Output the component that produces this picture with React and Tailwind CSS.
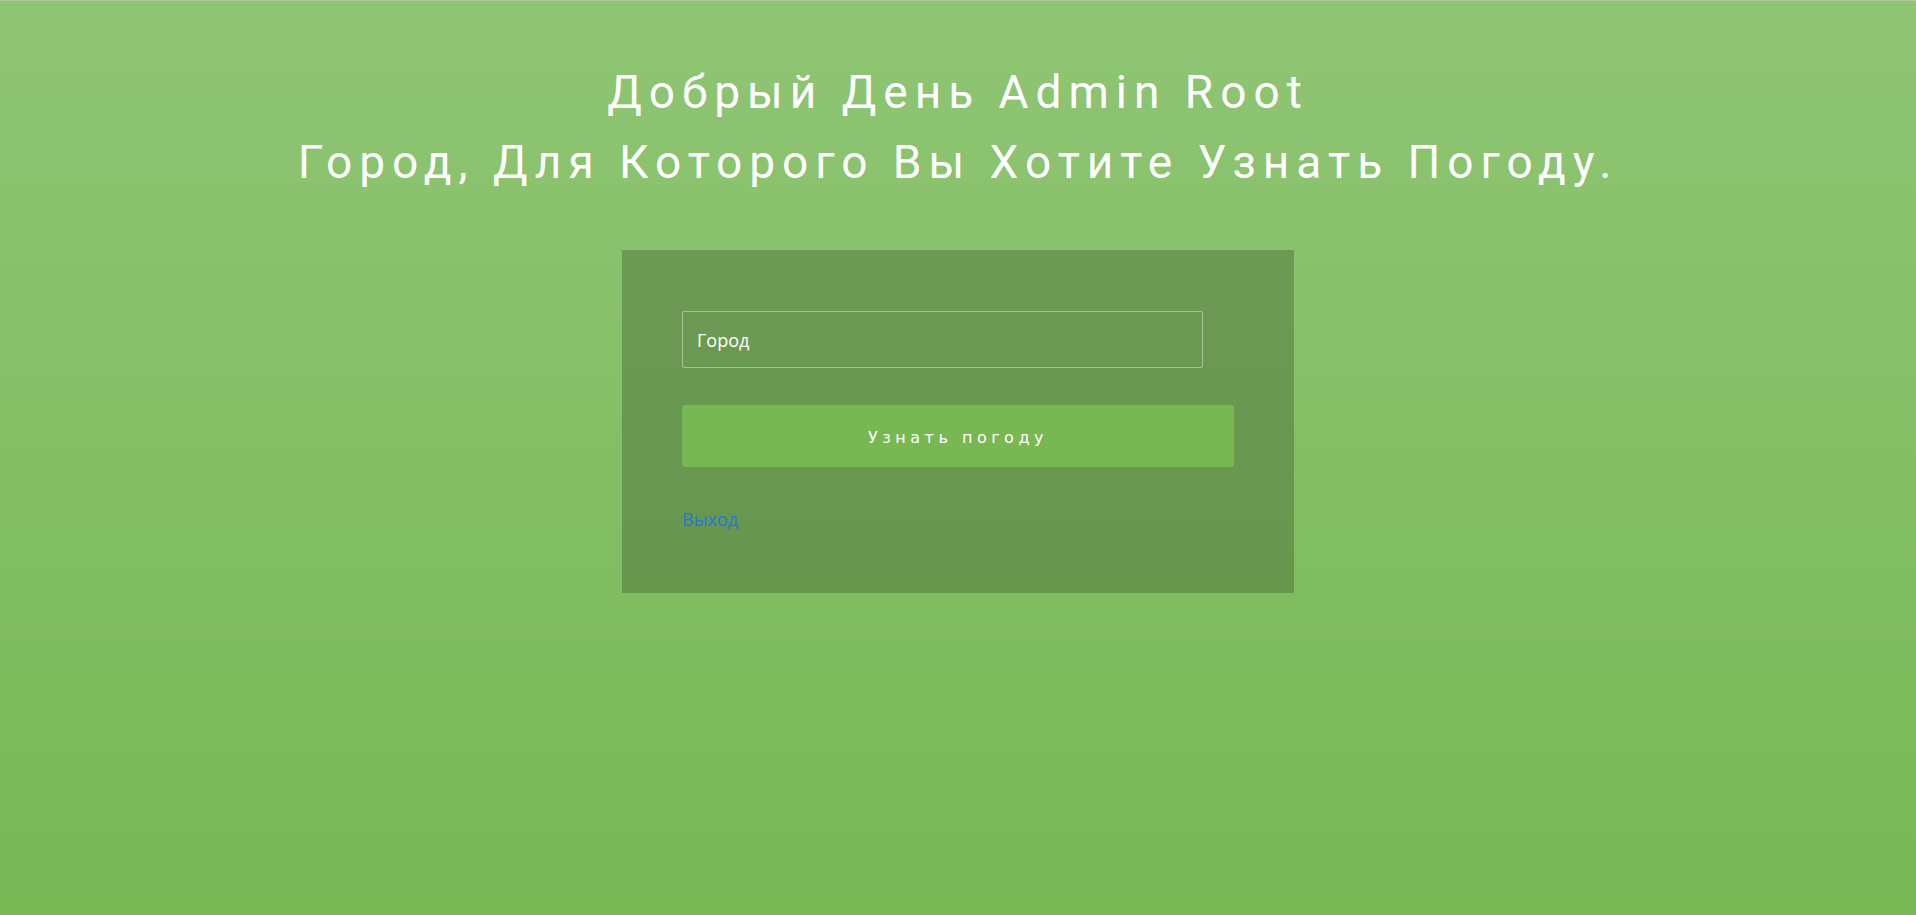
import { useState } from 'react';

const WeatherLogin = () => {
  const [city, setCity] = useState("");

  return (
    <div className="min-h-screen bg-gradient-to-b from-[#8fc574] to-[#78b855] font-['Roboto',sans-serif]">
      <div className="h-px bg-[#aec9a2]" />

      <div className="pt-[56px] text-center text-white text-[46px] leading-[70px] tracking-[7px] font-normal">
        <h1>Добрый День Admin Root</h1>
        <h2>Город, Для Которого Вы Хотите Узнать Погоду.</h2>
      </div>

      <div className="flex justify-center mt-[53px]">
        <form
          onSubmit={e => e.preventDefault()}
          className="w-[672px] bg-black/20 pt-[61px] px-[60px] pb-[60px]"
        >
          <input
            value={city}
            onChange={e => setCity(e.target.value)}
            placeholder="Город"
            className="block w-[521px] h-[57px] px-[14px] bg-transparent border border-white/40 rounded-[2px] text-[18px] text-white placeholder:text-white outline-none font-['Open_Sans',sans-serif]"
          />
          <button
            type="submit"
            className="block mt-[37px] w-[552px] h-[62px] pt-[3px] bg-[#77b852] rounded-[3px] text-white text-[16px] tracking-[4.5px] font-['DejaVu_Sans',sans-serif]"
          >
            Узнать погоду
          </button>
          <a href="#" className="block w-fit mt-[39px] text-[18px] leading-[27px] text-[#1e77dd] font-['Open_Sans',sans-serif]">
            Выход
          </a>
        </form>
      </div>
    </div>
  );
};

export default WeatherLogin;
